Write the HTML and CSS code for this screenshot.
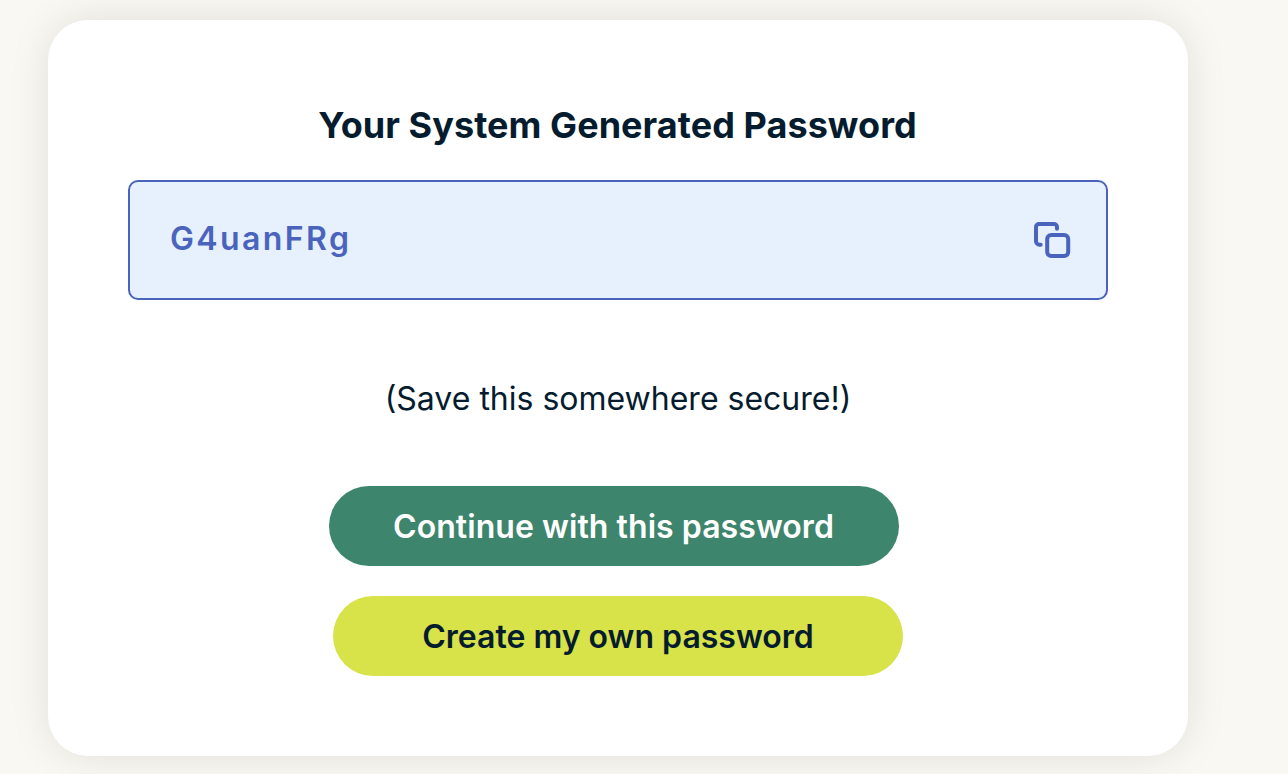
FILE: index.html
```html
<!DOCTYPE html>
<html lang="en">
<head>
<meta charset="utf-8">
<title>Your Password</title>
<link rel="stylesheet" href="styles.css">
</head>
<body>
<main class="card">
  <h1 class="title">Your System Generated Password</h1>
  <div class="password-box">
    <span class="password">G4uanFRg</span>
    <button class="copy" aria-label="Copy password">
      <svg width="40" height="40" viewBox="0 0 40 40" fill="none" stroke="currentColor" stroke-width="4" stroke-linecap="round" stroke-linejoin="round"><rect x="15.2" y="15.1" width="21" height="21" rx="4"/><path d="M8.7 24.7H7.5a3.5 3.5 0 0 1-3.5-3.5V7A3 3 0 0 1 7 4h15A3 3 0 0 1 25 7v1.7"/></svg>
    </button>
  </div>
  <p class="note">(Save this somewhere secure!)</p>
  <div class="actions">
    <button class="button primary">Continue with this password</button>
    <button class="button secondary">Create my own password</button>
  </div>
</main>
</body>
</html>
```
FILE: styles.css
```css
* { box-sizing: border-box; }
body {
  margin: 0;
  height: 774px;
  padding: 20px 100px 18px 48px;
  overflow: hidden;
  background: #f9f8f2;
  color: #051c2f;
  font-family: Inter, sans-serif;
}
.card {
  height: 736px;
  padding: 80px;
  border-radius: 40px;
  background: #fff;
  box-shadow: 0 0 40px rgba(0, 0, 0, 0.1);
}
.title {
  margin: 0 0 30px;
  padding-right: 1px;
  font-size: 36px;
  line-height: 50px;
  font-weight: 700;
  letter-spacing: 0.06px;
  text-align: center;
}
.password-box {
  display: flex;
  align-items: center;
  justify-content: space-between;
  height: 120px;
  padding: 0 34px 0 40px;
  border: 2px solid #4a64bd;
  border-radius: 10px;
  background: #e6f1fd;
  color: #4a64bd;
}
.password {
  padding-bottom: 2px;
  font-size: 32px;
  line-height: 48px;
  font-weight: 600;
  letter-spacing: 2.4px;
}
.copy {
  display: flex;
  padding: 0;
  border: 0;
  background: none;
  color: inherit;
}
.note {
  margin: 74px 0 62px;
  font-size: 32px;
  line-height: 50px;
  text-align: center;
}
.actions {
  display: flex;
  flex-direction: column;
  align-items: center;
  gap: 30px;
}
.button {
  width: 570px;
  height: 80px;
  padding: 2px 0 0;
  border: 0;
  border-radius: 40px;
  font: 600 32px/48px Inter, sans-serif;
}
.primary {
  margin-right: 8px;
  padding-right: 1px;
  background: #3d856c;
  color: #fff;
  letter-spacing: 0.06px;
}
.secondary {
  background: #d8e249;
  color: #051c2f;
}
```
